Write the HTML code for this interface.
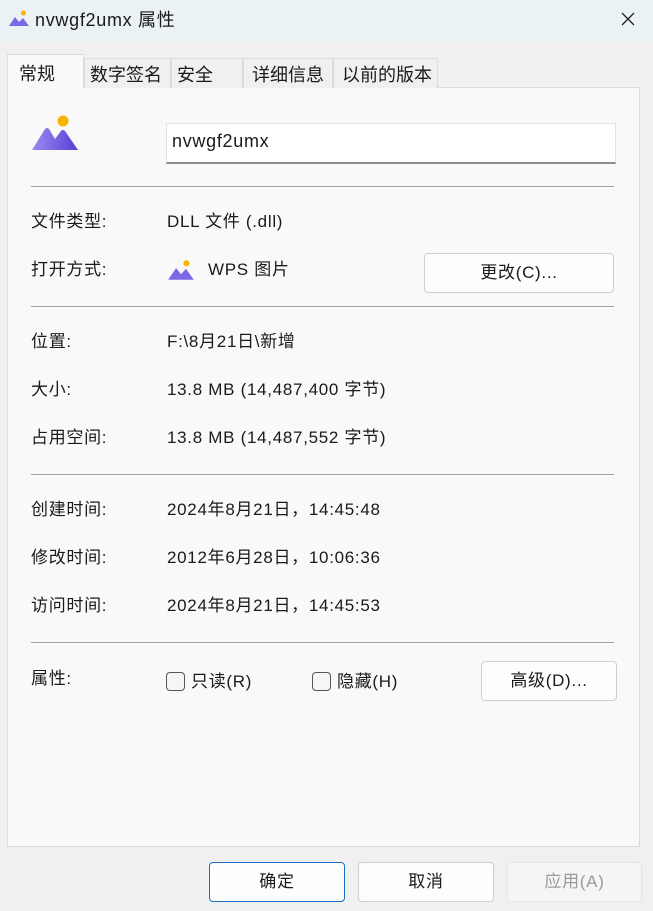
<!DOCTYPE html>
<html><head><meta charset="utf-8"><style>
*{margin:0;padding:0;box-sizing:border-box}
body{width:653px;height:911px;background:#f0f0f0;font-family:"Liberation Sans","Noto Sans CJK SC",sans-serif;font-size:17px;letter-spacing:0.7px;color:#1a1a1a;position:relative;overflow:hidden}
.a{position:absolute;white-space:nowrap;line-height:20px}
.title{left:0;top:0;width:653px;height:42px;background:#eaf2f5}
.tab{position:absolute;top:58px;height:30px;border:1px solid #dcdcdc;border-bottom:none;background:#f0f0f0;font-size:18px;padding:2px 0 0 5px;letter-spacing:0}
.panel{left:7px;top:87px;width:633px;height:760px;background:#f9f9f9;border:1px solid #dcdcdc}
.hr{height:1px;background:#a0a0a0;left:31px;width:583px}
.btn{position:absolute;background:#fdfdfd;border:1px solid #cfcfcf;border-radius:4px;text-align:center;line-height:20px}
.cb{position:absolute;width:19px;height:19px;border:1px solid #555;border-radius:4px;background:#f6f6f6}
</style></head><body>
<div class="a title"></div>
<svg class="a" style="left:8px;top:9px" width="22" height="20" viewBox="0 0 44 40"><circle cx="31" cy="8" r="5" fill="#f8b400"/><path d="M2 34 L14 16 L22 26 L30 18 L42 34 Z" fill="#7b68e6"/></svg>
<div class="a" style="left:35px;top:10px;font-size:18px">nvwgf2umx 属性</div>
<svg class="a" style="left:620px;top:11px" width="16" height="16" viewBox="0 0 16 16"><path d="M2 2L14 14M14 2L2 14" stroke="#222" stroke-width="1.3"/></svg>
<div class="a panel"></div>
<div class="tab" style="left:7px;top:54px;width:77px;height:34px;background:#f9f9f9;padding-top:5px;padding-left:11px">常规</div>
<div class="tab" style="left:84px;width:87px">数字签名</div>
<div class="tab" style="left:171px;width:72px">安全</div>
<div class="tab" style="left:243px;width:90px;padding-left:8px">详细信息</div>
<div class="tab" style="left:333px;width:105px;padding-left:8px">以前的版本</div>
<svg class="a" style="left:31px;top:115px" width="48" height="36" viewBox="0 0 48 36"><defs><linearGradient id="g" x1="0" x2="1"><stop offset="0" stop-color="#9a8af0"/><stop offset="1" stop-color="#5b3fd6"/></linearGradient></defs><circle cx="32" cy="6" r="5.5" fill="#f8b400"/><path d="M1 35 L14 14 Q16 12 18 14 L24 24 L30 16 Q32 14 34 16 L47 35 Z" fill="url(#g)"/></svg>
<div class="a" style="left:166px;top:123px;width:450px;height:41px;background:#fff;border:1px solid #e2e2e2;border-bottom:2px solid #8a8a8a;padding:7px 0 0 5px;font-size:18px">nvwgf2umx</div>
<div class="a hr" style="top:186px"></div>
<div class="a" style="left:31px;top:212px">文件类型:</div><div class="a" style="left:167px;top:212px">DLL 文件 (.dll)</div>
<div class="a" style="left:31px;top:260px">打开方式:</div>
<svg class="a" style="left:167px;top:259px" width="28" height="22" viewBox="0 0 44 36"><circle cx="31" cy="7" r="5" fill="#f8b400"/><path d="M1 34 L14 15 L22 25 L30 16 L43 34 Z" fill="#7b68e6"/></svg>
<div class="a" style="left:208px;top:260px">WPS 图片</div>
<div class="btn" style="left:424px;top:253px;width:190px;height:40px;padding-top:9px">更改(C)...</div>
<div class="a hr" style="top:306px"></div>
<div class="a" style="left:31px;top:332px">位置:</div><div class="a" style="left:167px;top:332px">F:\8月21日\新增</div>
<div class="a" style="left:31px;top:380px">大小:</div><div class="a" style="left:167px;top:380px">13.8 MB (14,487,400 字节)</div>
<div class="a" style="left:31px;top:428px">占用空间:</div><div class="a" style="left:167px;top:428px">13.8 MB (14,487,552 字节)</div>
<div class="a hr" style="top:474px"></div>
<div class="a" style="left:31px;top:500px">创建时间:</div><div class="a" style="left:167px;top:500px">2024年8月21日，14:45:48</div>
<div class="a" style="left:31px;top:548px">修改时间:</div><div class="a" style="left:167px;top:548px">2012年6月28日，10:06:36</div>
<div class="a" style="left:31px;top:596px">访问时间:</div><div class="a" style="left:167px;top:596px">2024年8月21日，14:45:53</div>
<div class="a hr" style="top:642px"></div>
<div class="a" style="left:31px;top:669px">属性:</div>
<div class="cb" style="left:166px;top:672px"></div><div class="a" style="left:191px;top:672px">只读(R)</div>
<div class="cb" style="left:312px;top:672px"></div><div class="a" style="left:337px;top:672px">隐藏(H)</div>
<div class="btn" style="left:481px;top:661px;width:136px;height:40px;padding-top:9px">高级(D)...</div>
<div class="btn" style="left:209px;top:862px;width:136px;height:40px;padding-top:9px;border-color:#1a6fc4">确定</div>
<div class="btn" style="left:358px;top:862px;width:136px;height:40px;padding-top:9px">取消</div>
<div class="btn" style="left:507px;top:862px;width:135px;height:40px;padding-top:9px;background:#f5f5f5;border-color:#e5e5e5;color:#9a9a9a">应用(A)</div>
</body></html>
